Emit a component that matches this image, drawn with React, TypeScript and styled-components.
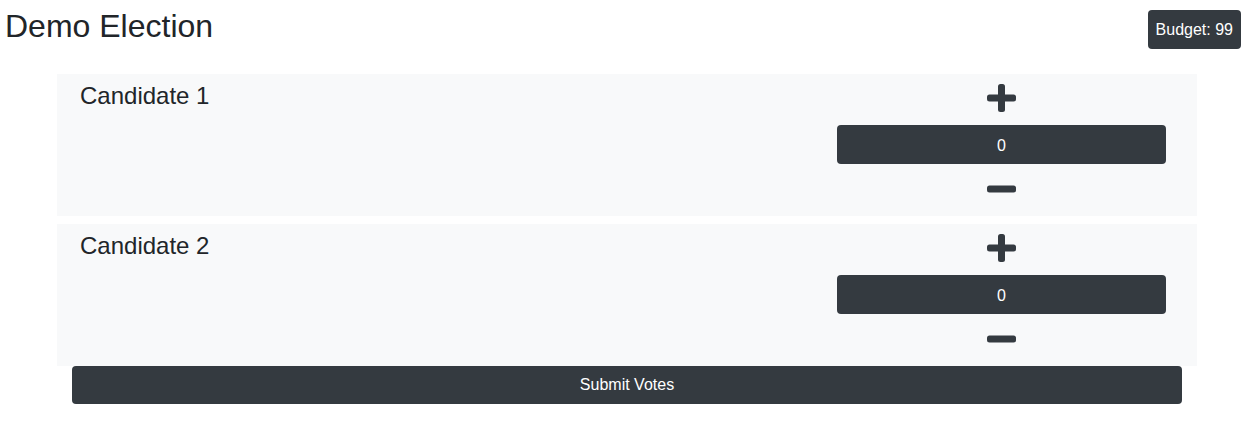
import styled, { createGlobalStyle } from "styled-components";

const GlobalStyle = createGlobalStyle`
  body {
    margin: 0;
    background: #ffffff;
    color: #212529;
    font-family: "Liberation Sans", Arial, sans-serif;
  }
`;

const Header = styled.div`
  display: flex;
  justify-content: space-between;
  align-items: flex-start;
  padding: 7px 16px 0 5px;
  margin-bottom: 25px;
`;

const Title = styled.h1`
  margin: 0;
  font-size: 32px;
  font-weight: 400;
  line-height: 1.2;
`;

const Badge = styled.div`
  margin-top: 3px;
  height: 39px;
  padding: 1px 8px 0;
  box-sizing: border-box;
  display: flex;
  align-items: center;
  background: #343a40;
  color: #ffffff;
  border-radius: 4px;
  font-size: 16px;
`;

const Main = styled.div`
  width: 1140px;
  margin-left: 57px;
  display: flex;
  flex-direction: column;
`;

const CandidateCard = styled.div`
  display: flex;
  justify-content: space-between;
  background: #f8f9fa;
  height: 142px;
  & + & {
    margin-top: 8px;
  }
`;

const Name = styled.h4`
  margin: 8px 0 0 23px;
  font-size: 24px;
  font-weight: 400;
  line-height: 1.2;
`;

const Controls = styled.div`
  width: 329px;
  margin-right: 31px;
  padding-top: 10px;
  display: flex;
  flex-direction: column;
  align-items: center;
`;

const IconButton = styled.button<{ $gap: number }>`
  margin-top: ${(p) => p.$gap}px;
  padding: 0;
  border: 0;
  background: transparent;
  display: flex;
  cursor: pointer;
`;

const VoteInput = styled.input`
  margin-top: 13px;
  width: 100%;
  height: 39px;
  box-sizing: border-box;
  padding: 2px 0 0;
  border: 0;
  border-radius: 4px;
  background: #343a40;
  color: #ffffff;
  font-family: inherit;
  font-size: 16px;
  text-align: center;
  outline: none;
`;

const SubmitButton = styled.button`
  margin: 0 15px;
  height: 38px;
  padding-top: 1px;
  border: 0;
  border-radius: 4px;
  background: #343a40;
  color: #ffffff;
  font-family: inherit;
  font-size: 16px;
  cursor: pointer;
`;

const PlusIcon = () => (
  <svg width="29" height="28" viewBox="0 0 29 28">
    <rect x="0" y="10.5" width="29" height="7" rx="2.5" fill="#343a40" />
    <rect x="11" y="0" width="7" height="28" rx="2.5" fill="#343a40" />
  </svg>
);

const MinusIcon = () => (
  <svg width="29" height="28" viewBox="0 0 29 28">
    <rect x="0" y="10.5" width="29" height="7" rx="2.5" fill="#343a40" />
  </svg>
);

const candidates = [
  { id: 1, name: "Candidate 1", votes: 0 },
  { id: 2, name: "Candidate 2", votes: 0 },
];

function App() {
  return (
    <>
      <GlobalStyle />
      <Header>
        <Title>Demo Election</Title>
        <Badge>Budget: 99</Badge>
      </Header>
      <Main>
        {candidates.map((c) => (
          <CandidateCard key={c.id}>
            <Name>{c.name}</Name>
            <Controls>
              <IconButton $gap={0}>
                <PlusIcon />
              </IconButton>
              <VoteInput readOnly value={c.votes} />
              <IconButton $gap={11}>
                <MinusIcon />
              </IconButton>
            </Controls>
          </CandidateCard>
        ))}
        <SubmitButton>Submit Votes</SubmitButton>
      </Main>
    </>
  );
}

export default App;
